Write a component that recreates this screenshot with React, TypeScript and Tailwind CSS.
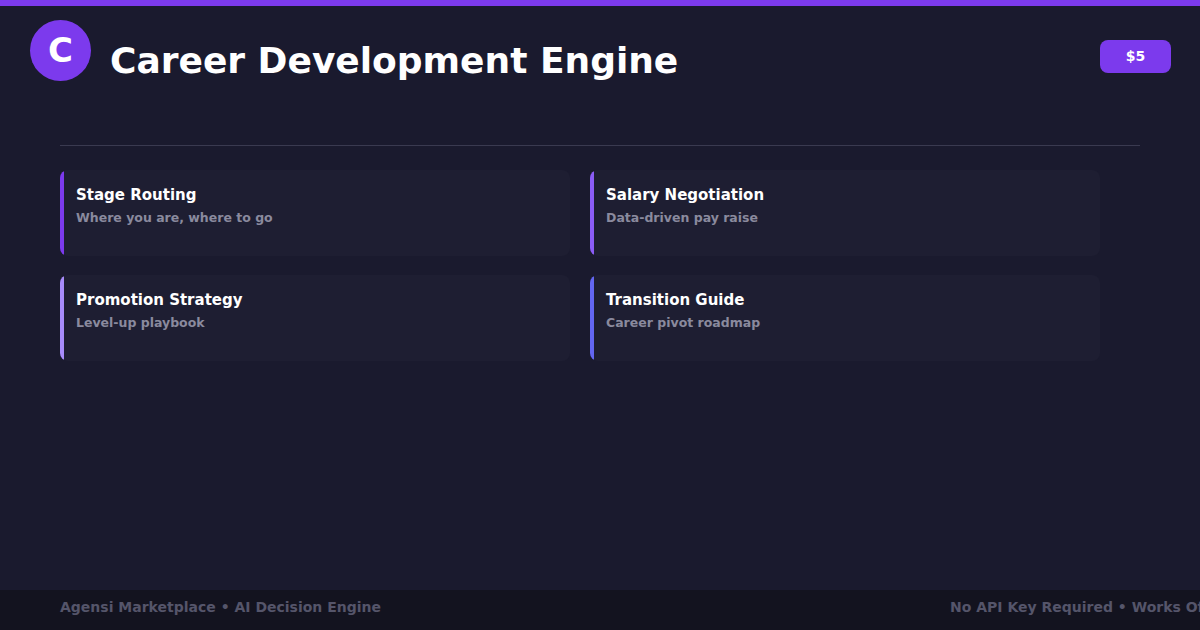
export default function App() {
  const cards = [
    { t: "Stage Routing", d: "Where you are, where to go", c: "bg-[#7c3aed]" },
    { t: "Salary Negotiation", d: "Data-driven pay raise", c: "bg-[#8b5cf6]" },
    { t: "Promotion Strategy", d: "Level-up playbook", c: "bg-[#a78bfa]" },
    { t: "Transition Guide", d: "Career pivot roadmap", c: "bg-[#6366f1]" },
  ];
  return (
    <div className="w-[1200px] h-[630px] bg-[#1a1a2e] flex flex-col overflow-hidden" style={{ fontFamily: '"DejaVu Sans", sans-serif' }}>
      <div className="h-[6px] bg-[#7c3aed] shrink-0" />
      <div className="flex items-start pl-[30px] pr-[29px] pt-[14px]">
        <div className="w-[61px] h-[61px] rounded-full bg-[#7c3aed] flex items-center justify-center text-white font-bold text-[34px]">C</div>
        <div className="ml-[19px] mt-[23px] text-white font-bold text-[36px] leading-none">Career Development Engine</div>
        <div className="ml-auto mt-[20px] w-[71px] h-[33px] rounded-lg bg-[#7c3aed] text-white font-bold text-[14px] flex items-center justify-center">$5</div>
      </div>
      <div className="mx-[60px] mt-[64px] h-px bg-[#3a3a50]" />
      <div className="grid grid-cols-[510px_510px] gap-x-[20px] gap-y-[19px] ml-[60px] mt-[24px]">
        {cards.map((k) => (
          <div key={k.t} className="h-[86px] rounded-lg bg-[#1e1e32] flex overflow-hidden">
            <div className={`w-[4px] rounded-full ${k.c}`} />
            <div className="pl-[12px] pt-[15px]">
              <div className="text-white font-bold text-[15px] leading-[20px]">{k.t}</div>
              <div className="text-[#8a8a9e] font-bold text-[12.5px] mt-[4px]">{k.d}</div>
            </div>
          </div>
        ))}
      </div>
      <div className="mt-auto h-[40px] bg-[#13131f] flex items-start pt-[7px] pl-[60px] text-[#55556a] font-bold text-[14px] whitespace-nowrap overflow-hidden">
        <span>Agensi Marketplace • AI Decision Engine</span>
        <span className="ml-[569px] shrink-0">No API Key Required • Works Offline</span>
      </div>
    </div>
  );
}
